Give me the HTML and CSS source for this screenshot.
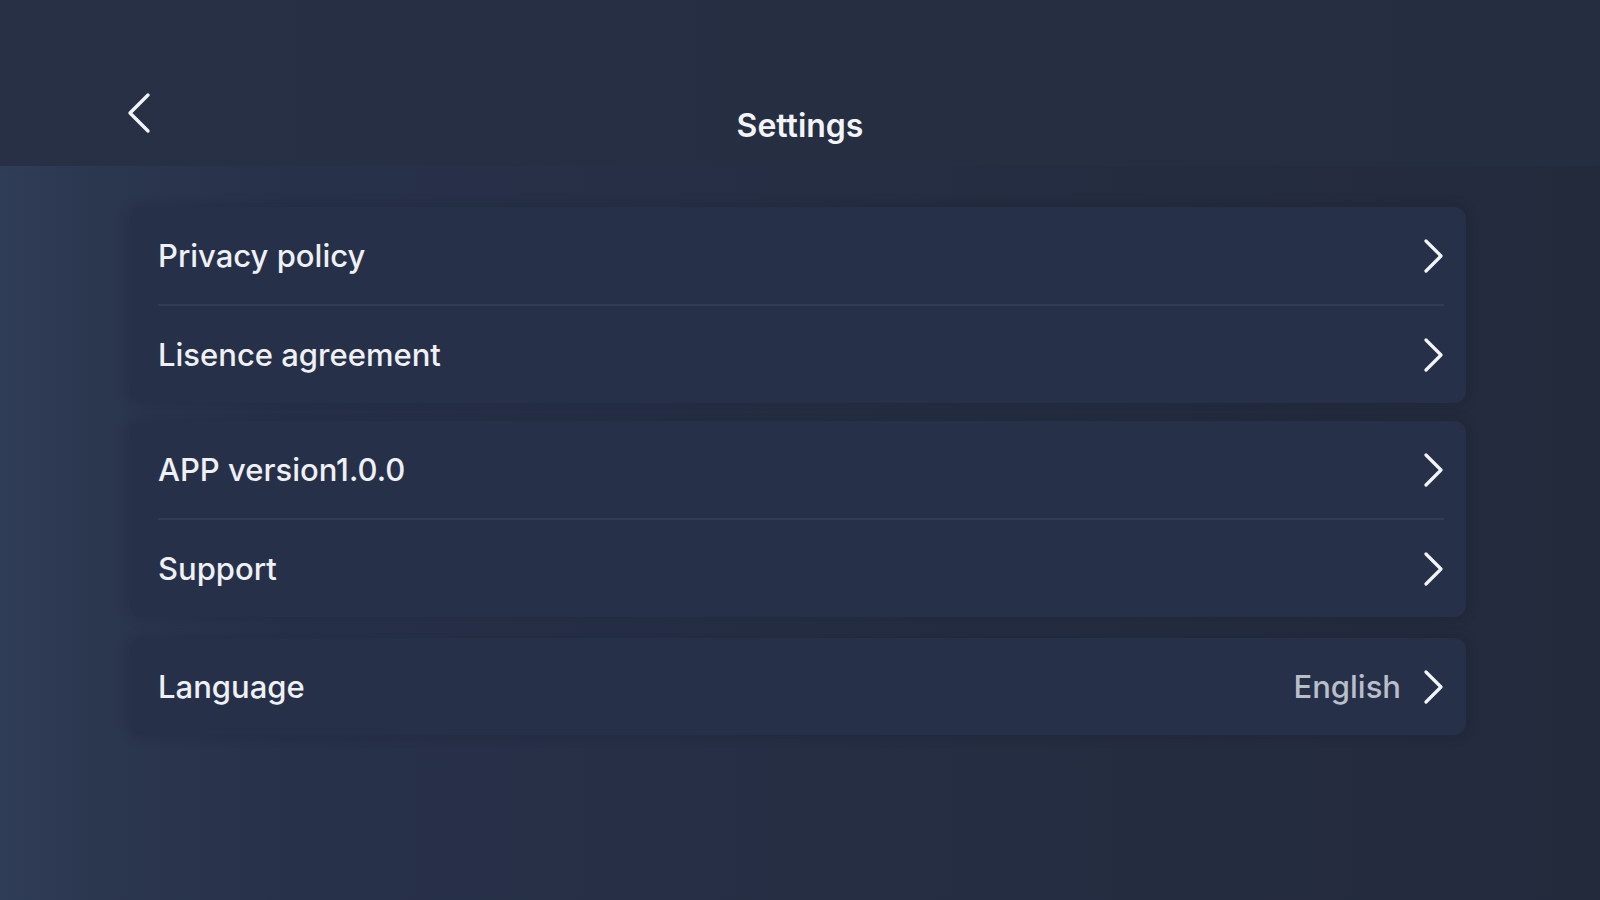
FILE: index.html
```html
<!DOCTYPE html>
<html lang="en">
<head>
<meta charset="utf-8">
<title>Settings</title>
<link rel="stylesheet" href="styles.css">
</head>
<body>
<div class="page">
  <header class="header">
    <button class="back" aria-label="Back">
      <svg width="26" height="42" viewBox="0 0 26 42"><path d="M22 3 L4 21 L22 39" fill="none" stroke="#f2f4f7" stroke-width="3.4" stroke-linecap="round" stroke-linejoin="round"/></svg>
    </button>
    <h1 class="title">Settings</h1>
    <div class="spacer"></div>
  </header>
  <main class="content">
    <section class="card">
      <div class="row"><span class="label">Privacy policy</span><span class="end"><svg class="chev" width="22" height="34" viewBox="0 0 22 34"><path d="M3 2 L18 17 L3 32" fill="none" stroke="#f2f4f7" stroke-width="3.2" stroke-linecap="round" stroke-linejoin="round"/></svg></span></div>
      <div class="divider"></div>
      <div class="row"><span class="label">Lisence agreement</span><span class="end"><svg class="chev" width="22" height="34" viewBox="0 0 22 34"><path d="M3 2 L18 17 L3 32" fill="none" stroke="#f2f4f7" stroke-width="3.2" stroke-linecap="round" stroke-linejoin="round"/></svg></span></div>
    </section>
    <section class="card">
      <div class="row"><span class="label">APP version1.0.0</span><span class="end"><svg class="chev" width="22" height="34" viewBox="0 0 22 34"><path d="M3 2 L18 17 L3 32" fill="none" stroke="#f2f4f7" stroke-width="3.2" stroke-linecap="round" stroke-linejoin="round"/></svg></span></div>
      <div class="divider"></div>
      <div class="row"><span class="label">Support</span><span class="end"><svg class="chev" width="22" height="34" viewBox="0 0 22 34"><path d="M3 2 L18 17 L3 32" fill="none" stroke="#f2f4f7" stroke-width="3.2" stroke-linecap="round" stroke-linejoin="round"/></svg></span></div>
    </section>
    <section class="card card-single">
      <div class="row"><span class="label">Language</span><span class="end"><span class="value">English</span><svg class="chev" width="22" height="34" viewBox="0 0 22 34"><path d="M3 2 L18 17 L3 32" fill="none" stroke="#f2f4f7" stroke-width="3.2" stroke-linecap="round" stroke-linejoin="round"/></svg></span></div>
    </section>
  </main>
</div>
</body>
</html>
```

FILE: styles.css
```css
* { box-sizing: border-box; }
html, body {
  margin: 0;
  padding: 0;
  height: 100%;
}
body {
  font-family: Inter, "Noto Sans", "Liberation Sans", sans-serif;
  color: #eef0f4;
  background:
    linear-gradient(180deg, rgba(70, 90, 125, 0.16) 0px, rgba(70, 90, 125, 0) 90px),
    linear-gradient(90deg, #303d57 0%, #2b374f 6%, #27314a 18%, #252e43 50%, #232a3c 100%);
  background-attachment: fixed;
}
.page {
  width: 1600px;
  height: 900px;
  overflow: hidden;
  display: flex;
  flex-direction: column;
}
.header {
  height: 166px;
  flex: none;
  display: grid;
  grid-template-columns: 1fr auto 1fr;
  align-items: start;
  padding: 92px 126px 0 126px;
  background: linear-gradient(90deg, #273045 0%, #262e42 50%, #252d40 100%);
}
.back {
  justify-self: start;
  background: none;
  border: 0;
  padding: 0;
  width: 26px;
  height: 42px;
  cursor: pointer;
  display: block;
}
.back svg { display: block; }
.title {
  margin: 14px 0 0 0;
  font-size: 32px;
  line-height: 40px;
  font-weight: 600;
  color: #f2f4f7;
}
.content {
  padding: 41px 134px 0 130px;
  display: flex;
  flex-direction: column;
  gap: 18px;
}
.card {
  background: #273049;
  border-radius: 12px;
  box-shadow: 0 0 14px rgba(10, 14, 24, 0.18);
  display: flex;
  flex-direction: column;
}
.card-single {
  margin-top: 3px;
}
.row {
  height: 97px;
  display: flex;
  align-items: center;
  justify-content: space-between;
  padding: 0 21px 0 28px;
}
.label {
  font-size: 31px;
  font-weight: 500;
  color: #eef0f4;
}
.end {
  display: flex;
  align-items: center;
  gap: 22px;
}
.value {
  font-size: 31px;
  font-weight: 500;
  color: #b9bfca;
}
.chev { display: block; }
.divider {
  height: 2px;
  margin: 0 22px 0 28px;
  background: #333c53;
}
```
